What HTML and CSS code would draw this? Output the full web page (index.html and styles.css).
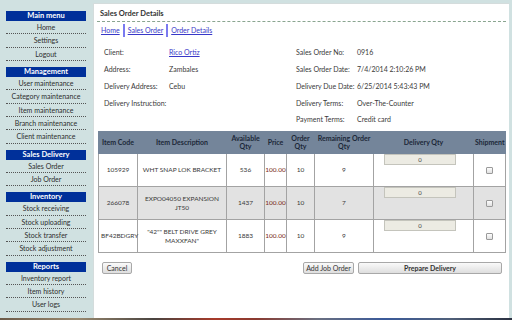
FILE: index.html
```html
<!DOCTYPE html>
<html lang="en">
<head>
    <meta charset="UTF-8">
    <meta name="viewport" content="width=device-width, initial-scale=1.0">
    <title>Sales Order Details</title>
    <link rel="stylesheet" href="styles.css">
</head>
<body>
    <div class="page">
        <div class="sidebar">
            <div class="menu-title">Main menu</div>
            <a class="menu-item" href="#">Home</a>
            <a class="menu-item" href="#">Settings</a>
            <a class="menu-item" href="#">Logout</a>

            <div class="menu-title">Management</div>
            <a class="menu-item" href="#">User maintenance</a>
            <a class="menu-item" href="#">Category maintenance</a>
            <a class="menu-item" href="#">Item maintenance</a>
            <a class="menu-item" href="#">Branch maintenance</a>
            <a class="menu-item" href="#">Client maintenance</a>

            <div class="menu-title">Sales Delivery</div>
            <a class="menu-item" href="#">Sales Order</a>
            <a class="menu-item" href="#">Job Order</a>

            <div class="menu-title">Inventory</div>
            <a class="menu-item" href="#">Stock receiving</a>
            <a class="menu-item" href="#">Stock uploading</a>
            <a class="menu-item" href="#">Stock transfer</a>
            <a class="menu-item" href="#">Stock adjustment</a>

            <div class="menu-title">Reports</div>
            <a class="menu-item" href="#">Inventory report</a>
            <a class="menu-item" href="#">Item history</a>
            <a class="menu-item" href="#">User logs</a>
        </div>

        <div class="content">
            <div class="page-title">Sales Order Details</div>

            <div class="breadcrumb">
                <a href="#">Home</a>
                <a href="#">Sales Order</a>
                <a href="#">Order Details</a>
            </div>

            <div class="info">
                <span class="label">Client:</span>
                <span class="value"><a href="#">Rico Ortiz</a></span>
                <span class="label">Sales Order No:</span>
                <span class="value">0916</span>

                <span class="label">Address:</span>
                <span class="value">Zambales</span>
                <span class="label">Sales Order Date:</span>
                <span class="value">7/4/2014 2:10:26 PM</span>

                <span class="label">Delivery Address:</span>
                <span class="value">Cebu</span>
                <span class="label">Delivery Due Date:</span>
                <span class="value">6/25/2014 5:43:43 PM</span>

                <span class="label">Delivery Instruction:</span>
                <span class="value"></span>
                <span class="label">Delivery Terms:</span>
                <span class="value">Over-The-Counter</span>

                <span class="label"></span>
                <span class="value"></span>
                <span class="label">Payment Terms:</span>
                <span class="value">Credit card</span>
            </div>

            <table class="items">
                <colgroup>
                    <col style="width: 39px">
                    <col style="width: 89px">
                    <col style="width: 38px">
                    <col style="width: 22px">
                    <col style="width: 28px">
                    <col style="width: 59px">
                    <col style="width: 100px">
                    <col style="width: 32px">
                </colgroup>
                <thead>
                    <tr>
                        <th>Item Code</th>
                        <th>Item Description</th>
                        <th>Available Qty</th>
                        <th>Price</th>
                        <th>Order Qty</th>
                        <th>Remaining Order Qty</th>
                        <th>Delivery Qty</th>
                        <th>Shipment</th>
                    </tr>
                </thead>
                <tbody>
                    <tr>
                        <td>105929</td>
                        <td>WHT SNAP LOK BRACKET</td>
                        <td>536</td>
                        <td class="price">100.00</td>
                        <td>10</td>
                        <td>9</td>
                        <td class="qty-cell"><input class="qty-input" type="text" value="0"></td>
                        <td><input class="ship-check" type="checkbox"></td>
                    </tr>
                    <tr class="alt">
                        <td>266078</td>
                        <td>EXPO04050 EXPANSION JT50</td>
                        <td>1437</td>
                        <td class="price">100.00</td>
                        <td>10</td>
                        <td>7</td>
                        <td class="qty-cell"><input class="qty-input" type="text" value="0"></td>
                        <td><input class="ship-check" type="checkbox"></td>
                    </tr>
                    <tr>
                        <td>BF42BDGRY</td>
                        <td>"42"" BELT DRIVE GREY MAXXFAN"</td>
                        <td>1883</td>
                        <td class="price">100.00</td>
                        <td>10</td>
                        <td>9</td>
                        <td class="qty-cell"><input class="qty-input" type="text" value="0"></td>
                        <td><input class="ship-check" type="checkbox"></td>
                    </tr>
                </tbody>
            </table>

            <div class="actions">
                <button class="btn btn-cancel">Cancel</button>
                <button class="btn btn-job">Add Job Order</button>
                <button class="btn btn-deliver">Prepare Delivery</button>
            </div>
        </div>
    </div>
    <div class="strip"></div>
</body>
</html>
```

FILE: styles.css
```css
body {
    font-family: Lato, "Liberation Sans", sans-serif;
    background: #d0e1e1;
    margin: 0;
    height: 320px;
    overflow: hidden;
    color: #3a3a3a;
}

.page {
    display: flex;
    height: 318px;
}

.strip {
    height: 2px;
    background: linear-gradient(90deg, #6b5a48 0%, #9a8a70 15%, #4a4440 30%, #a83a2a 42%, #8a3a30 50%, #6a6f80 62%, #3a5a9a 75%, #50607a 88%, #2a3040 100%);
}

/* sidebar */
.sidebar {
    width: 93px;
    box-sizing: border-box;
    padding: 11px 7px 0 6px;
    flex-shrink: 0;
}

.menu-title {
    background: #00309a;
    color: white;
    font-weight: 700;
    font-size: 7.5px;
    height: 10px;
    line-height: 10px;
    text-align: center;
    margin-top: 6px;
}

.menu-title:first-child {
    margin-top: 0;
}

.menu-item {
    display: block;
    box-sizing: border-box;
    height: 13.33px;
    line-height: 13px;
    border-bottom: 1px dotted #555;
    text-align: center;
    font-size: 7px;
    color: #2e2e2e;
    text-decoration: none;
}

/* main panel */
.content {
    flex: 1;
    background: white;
    margin: 3px 3px 0 0;
    border-top: 1px solid #d4dcdc;
    border-left: 1px solid #d4dcdc;
    font-size: 7px;
}

.page-title {
    margin: 0 3px 0 3px;
    padding: 5px 0 2px 3px;
    line-height: 10px;
    font-size: 7.5px;
    font-weight: 700;
    color: #333;
    border-bottom: 1px dashed #8aa590;
}

.breadcrumb {
    display: flex;
    align-items: center;
    height: 13px;
    margin: 2px 0 0 7px;
}

.breadcrumb a {
    color: #3838c8;
    font-size: 7px;
    line-height: 13px;
}

.breadcrumb a + a {
    border-left: 2px solid #7a7af0;
    padding-left: 3px;
    margin-left: 3px;
}

a {
    color: #3838c8;
}

.info {
    display: grid;
    grid-template-columns: 65px 127px 61px 1fr;
    grid-auto-rows: 16.75px;
    align-items: center;
    margin: 7px 0 0 10px;
}

/* items table */
.items {
    border-collapse: collapse;
    table-layout: fixed;
    width: 407px;
    margin: 3px 0 0 4px;
    text-align: center;
    font-size: 6.5px;
}

.items th {
    background: #74859a;
    color: #1c2838;
    font-weight: 700;
    font-size: 7px;
    height: 21px;
    padding: 0 1px;
    line-height: 8px;
    border: 1px solid #74859a;
    border-left-color: #99a6b4;
}

.items th:first-child {
    border-left-color: #74859a;
}

.items td {
    height: 32px;
    padding: 0 2px;
    border: 1px solid #a3a3a3;
    color: #3a3a3a;
    line-height: 9px;
}

.items tr.alt td {
    background: #e2e2e2;
}

.items td.price {
    color: #7a2a12;
    padding: 0;
}

.items td.qty-cell {
    vertical-align: top;
    padding: 0;
}

.qty-input {
    display: block;
    width: 72px;
    height: 11px;
    box-sizing: border-box;
    margin: 0 0 0 10px;
    padding: 0;
    border: 1px solid #c4c4bc;
    background: #ecebe3;
    font-family: Lato, "Liberation Sans", sans-serif;
    font-size: 6px;
    text-align: center;
    color: #444;
}

.ship-check {
    appearance: none;
    width: 7px;
    height: 7px;
    margin: 0;
    vertical-align: middle;
    border: 1px solid #9a9a9a;
    border-radius: 1px;
    background: linear-gradient(#fdfdfd, #e0e0e0);
}

/* buttons */
.actions {
    display: flex;
    gap: 4px;
    margin: 9px 0 0 8px;
    width: 400px;
}

.btn {
    font-family: Lato, "Liberation Sans", sans-serif;
    font-size: 7px;
    color: #333;
    height: 12px;
    padding: 0;
    line-height: 10px;
    white-space: nowrap;
    background: linear-gradient(#fafafa, #dedede);
    border: 1px solid #a8a8a8;
    border-radius: 2px;
}

.btn-cancel {
    width: 30px;
    margin-right: auto;
}

.btn-job {
    width: 51px;
}

.btn-deliver {
    width: 144px;
    font-weight: 700;
}
```
